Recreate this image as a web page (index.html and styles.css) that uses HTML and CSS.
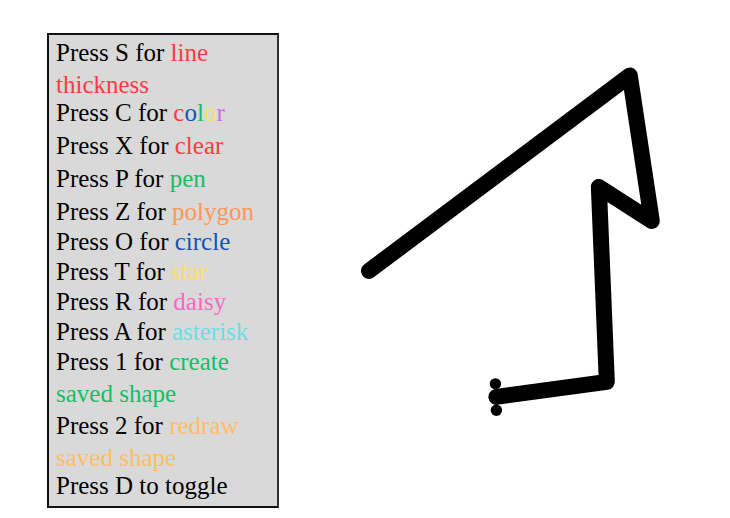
FILE: index.html
```html
<!DOCTYPE html>
<html lang="en">
<head>
<meta charset="utf-8">
<title>Drawing canvas</title>
<link rel="stylesheet" href="styles.css">
</head>
<body>
<main class="app">
  <aside class="panel">
    <p class="row wrap">Press S for <span class="red">line</span> <span class="red">thickness</span></p>
    <div class="group tools">
      <p class="row">Press C for <span class="red">c</span><span class="blue">o</span><span class="green">l</span><span class="yellow">o</span><span class="purple">r</span></p>
      <p class="row">Press X for <span class="red">clear</span></p>
      <p class="row">Press P for <span class="green">pen</span></p>
      <p class="row">Press Z for <span class="orange">polygon</span></p>
    </div>
    <div class="group shapes">
      <p class="row">Press O for <span class="blue">circle</span></p>
      <p class="row">Press T for <span class="yellow">star</span></p>
      <p class="row">Press R for <span class="pink">daisy</span></p>
      <p class="row">Press A for <span class="cyan">asterisk</span></p>
    </div>
    <p class="row wrap">Press 1 for <span class="green">create</span> <span class="green">saved shape</span></p>
    <p class="row wrap">Press 2 for <span class="amber">redraw</span> <span class="amber">saved shape</span></p>
    <p class="row">Press D to toggle</p>
  </aside>
  <svg class="canvas" viewBox="279 33 451 475" preserveAspectRatio="xMinYMin meet" role="img" aria-label="Drawn line">
    <polyline class="stroke" points="369,271 630,75.5 652,221 599,187 607,382 496.500,397"/>
    <path class="stem" d="M495.500 384L496.500 410"/>
    <circle cx="495.500" cy="384" r="5.700"/>
    <circle cx="496.500" cy="410.500" r="5.700"/>
  </svg>
</main>
</body>
</html>
```
FILE: styles.css
```css
body {
  margin: 0;
  background: #fff;
  color: #000;
  font-family: "Liberation Serif", serif;
  font-size: 25px;
}

.app {
  display: flex;
  align-items: flex-start;
  padding: 33px 0 10px 47px;
}

.panel {
  box-sizing: border-box;
  flex: 0 0 34%;
  padding: 2px 7px 8px;
  background: #d9d9d9;
  border: 2px solid #111;
  border-right-color: #333;
}

.row {
  margin: 0;
  line-height: 24px;
}

.wrap {
  line-height: 32px;
}

.group {
  display: grid;
}

.tools {
  gap: 9px;
}

.shapes {
  gap: 6px;
  padding: 6px 0 2px;
}

.canvas {
  flex: 1;
  min-width: 0;
}

.stroke {
  fill: none;
  stroke: #000;
  stroke-width: 16px;
  stroke-linecap: round;
  stroke-linejoin: round;
}

.stem {
  stroke: #000;
  stroke-width: 2px;
}

.red { color: #ff3b40; }
.blue { color: #1353b5; }
.green { color: #10c064; }
.yellow { color: #ffde63; }
.purple { color: #cb6ce6; }
.orange { color: #ff9654; }
.pink { color: #ff66c4; }
.cyan { color: #66e0e5; }
.amber { color: #ffbd62; }
```
